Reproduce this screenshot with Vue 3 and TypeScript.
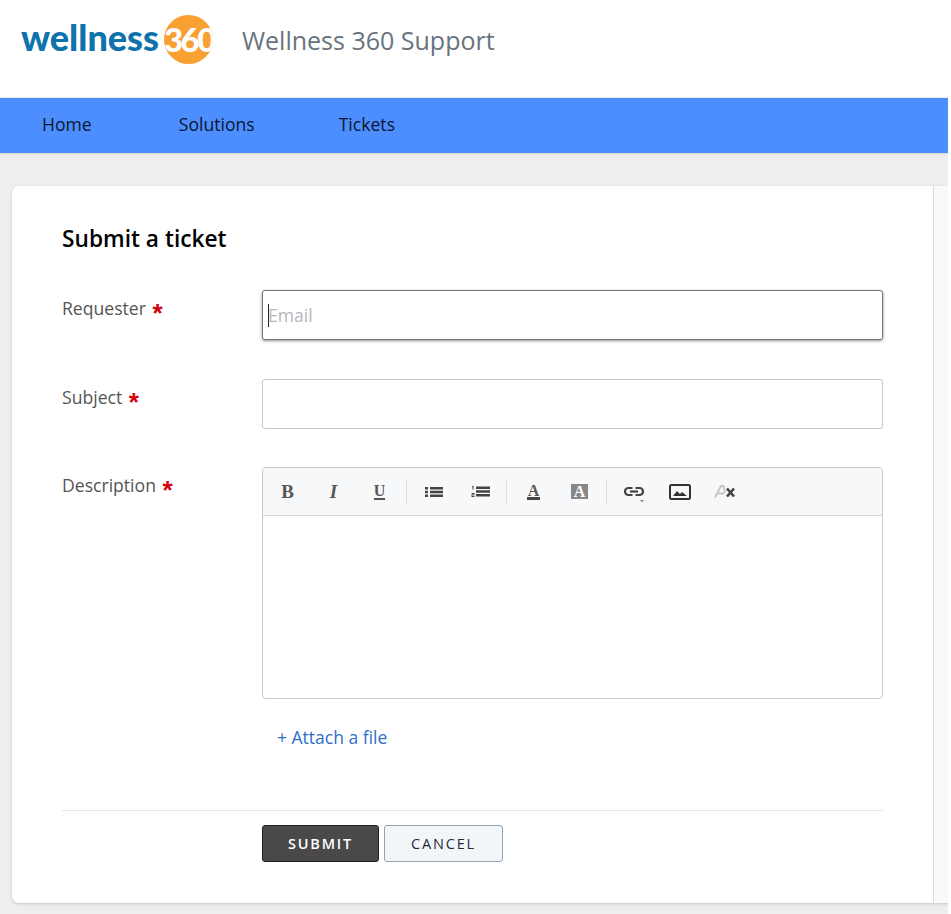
<script setup lang="ts">
interface Field {
  label: string
  key: string
}

const navItems = ['Home', 'Solutions', 'Tickets']
const fields: Field[] = [
  { label: 'Requester', key: 'requester' },
  { label: 'Subject', key: 'subject' },
]
</script>

<template>
  <div class="page">
    <header class="top">
      <div class="logo">
        <span class="logo-word">wellness</span>
        <span class="logo-badge">360</span>
      </div>
      <h1 class="site-name">Wellness 360 Support</h1>
    </header>

    <nav class="nav">
      <a v-for="item in navItems" :key="item" class="nav-link">{{ item }}</a>
    </nav>

    <main class="content">
      <div class="card">
        <form class="form" @submit.prevent>
          <h2 class="title">Submit a ticket</h2>

          <div v-for="f in fields" :key="f.key" class="row">
            <label class="label">{{ f.label }} <span class="req">*</span></label>
            <div v-if="f.key === 'requester'" class="input focused">
              <span class="caret"></span><span class="placeholder">Email</span>
            </div>
            <div v-else class="input"></div>
          </div>

          <div class="row row-desc">
            <label class="label">Description <span class="req">*</span></label>
            <div class="editor">
              <div class="toolbar">
                <div class="group">
                  <button type="button" class="tool"><span class="glyph">B</span></button>
                  <button type="button" class="tool"><span class="glyph italic">I</span></button>
                  <button type="button" class="tool"><span class="glyph under">U</span></button>
                </div>
                <div class="group">
                  <button type="button" class="tool">
                    <svg width="18" height="10" viewBox="0 0 18 10" fill="#444">
                      <path d="M0 0h3v2.500H0zM5 0h13v2.500H5zM0 3.700h3v2.600H0zM5 3.700h13v2.600H5zM0 7.500h3V10H0zM5 7.500h13V10H5z" />
                    </svg>
                  </button>
                  <button type="button" class="tool">
                    <svg width="19" height="11" viewBox="0 0 19 11" fill="#444">
                      <path d="M5 0.500h14v2.500H5zM5 4.200h14v2.600H5zM5 8h14v2.500H5zM1 0h1.500v3.500H1.500V1H1zM.5 7h3v2H1.500v.8h2V11h-3V8.500h2v-.6h-2z" />
                    </svg>
                  </button>
                </div>
                <div class="group">
                  <button type="button" class="tool"><span class="glyph under-thick">A</span></button>
                  <button type="button" class="tool"><span class="glyph boxed">A</span></button>
                </div>
                <div class="group last">
                  <button type="button" class="tool">
                    <svg class="link-icon" width="20" height="20" viewBox="0 0 20 20" fill="none" stroke="#444" stroke-width="2.200">
                      <path d="M8.500 4H4.500a3.500 3.500 0 0 0 0 7h4" />
                      <path d="M11.500 4h4a3.500 3.500 0 0 1 0 7h-4" />
                      <path d="M6 7.500h8" />
                      <path d="M17 16h4l-2 2.500z" fill="#888" stroke="none" transform="translate(-1 0)" />
                    </svg>
                  </button>
                  <button type="button" class="tool">
                    <svg width="22" height="16" viewBox="0 0 22 16">
                      <rect x="1" y="1" width="20" height="14" rx="1.500" fill="none" stroke="#333" stroke-width="2" />
                      <path d="M4 12l4-5 3 3 2-2 5 4z" fill="#333" />
                    </svg>
                  </button>
                  <button type="button" class="tool">
                    <svg class="clear-icon" width="21" height="13" viewBox="0 0 21 13">
                      <path d="M1 12.500L7 1h2.500l1.500 7M4 8.500h6" fill="none" stroke="#c4c4c4" stroke-width="1.800" />
                      <path d="M13 3.500l7 8M20 3.500l-7 8" fill="none" stroke="#444" stroke-width="2.600" />
                    </svg>
                  </button>
                </div>
              </div>
              <div class="editor-body"></div>
            </div>
          </div>

          <div class="attach-row">
            <a class="attach">+ Attach a file</a>
          </div>

          <div class="actions">
            <button type="submit" class="btn btn-primary">SUBMIT</button>
            <button type="button" class="btn btn-plain">CANCEL</button>
          </div>
        </form>
        <aside class="side"></aside>
      </div>
    </main>
  </div>
</template>

<style>
html,
body {
  margin: 0;
  background: #fff;
}
</style>

<style scoped>
.page {
  width: 948px;
  height: 914px;
  overflow: hidden;
  background: #eee;
  font-family: "Open Sans", "Liberation Sans", sans-serif;
}

.top {
  height: 97px;
  background: #fff;
  display: flex;
  align-items: flex-start;
  padding-left: 21px;
}

.logo {
  display: flex;
  align-items: flex-start;
  margin-top: 15px;
  height: 50px;
}

.logo-word {
  font-family: "Lato", "Open Sans", sans-serif;
  font-weight: 900;
  font-size: 36px;
  color: #0e72ac;
  line-height: 50px;
  margin-top: -3px;
}

.logo-badge {
  width: 49px;
  height: 49px;
  margin-left: 5px;
  border-radius: 50%;
  background: #f9a033;
  color: #fff;
  font-family: "Lato", sans-serif;
  font-weight: 900;
  font-size: 33px;
  line-height: 49px;
  text-align: center;
  letter-spacing: -2.500px;
  overflow: hidden;
}

.site-name {
  margin: 23px 0 0 29px;
  font-size: 25px;
  line-height: 35px;
  font-weight: 400;
  color: #68737d;
}

.nav {
  height: 55px;
  margin-top: 1px;
  box-sizing: border-box;
  padding: 0 0 3px 42px;
  background: #4d8eff;
  display: flex;
  align-items: center;
  gap: 84px;
  box-shadow: 0 1px 2px rgba(0, 0, 0, 0.12);
}

.nav-link {
  font-size: 17.600px;
  color: #0b1530;
}

.nav-link:first-child {
  margin-right: 3px;
}

.content {
  padding: 33px 0 0 12px;
}

.card {
  display: flex;
  height: 717px;
  background: #fff;
  border-radius: 7px 0 0 7px;
  box-shadow: 0 1px 3px rgba(0, 0, 0, 0.18);
}

.form {
  width: 921px;
  padding: 0 50px;
  box-sizing: border-box;
  flex: none;
}

.side {
  flex: 1;
  background: #f8f9fb;
  border-left: 1px solid #dcdcdc;
}

.title {
  margin: 36px 0 0;
  font-size: 22.700px;
  line-height: 34px;
  font-weight: 550;
  color: #000;
}

.row {
  display: flex;
  margin-top: 34px;
}

.row + .row {
  margin-top: 39px;
}

.row + .row-desc {
  margin-top: 38px;
}

.label {
  width: 200px;
  flex: none;
  font-size: 17.600px;
  line-height: 24px;
  color: #555;
  padding-top: 6px;
}

.req {
  color: #d3000f;
  font-family: "Liberation Sans", sans-serif;
  font-size: 26px;
  line-height: 20px;
  font-weight: 700;
  vertical-align: -7px;
  margin-left: 2px;
}

.input {
  width: 621px;
  height: 50px;
  box-sizing: border-box;
  border: 1px solid #c8c8c8;
  border-radius: 3px;
  background: #fff;
  display: flex;
  align-items: center;
}

.input.focused {
  border-color: #777;
  box-shadow: 0 1px 3px rgba(0, 0, 0, 0.45);
  padding-left: 5px;
}

.caret {
  width: 1px;
  height: 23px;
  background: #223;
}

.placeholder {
  font-size: 17.600px;
  color: #b4b8bd;
  margin-left: -1px;
}

.editor {
  width: 621px;
  height: 232px;
  box-sizing: border-box;
  border: 1px solid #c8c8c8;
  border-radius: 4px;
  display: flex;
  flex-direction: column;
}

.toolbar {
  height: 47px;
  flex: none;
  display: flex;
  align-items: center;
  background: #f7f8fa;
  border-bottom: 1px solid #d5d5d5;
  border-radius: 4px 4px 0 0;
  padding-left: 2px;
}

.group {
  display: flex;
  align-items: center;
  height: 26px;
  border-right: 1px solid #ddd;
  padding-right: 3px;
}

.group + .group {
  padding-left: 4px;
}

.group.last {
  border-right: 0;
}

.tool {
  width: 46px;
  height: 26px;
  padding: 0;
  border: 0;
  background: none;
  display: flex;
  align-items: center;
  justify-content: center;
}

.link-icon {
  margin-top: 4px;
}

.clear-icon {
  margin-left: -4px;
  margin-top: -1px;
}

.glyph {
  font-family: "Liberation Serif", serif;
  font-weight: 700;
  font-size: 19px;
  color: #555;
  line-height: 18px;
  margin-left: -1px;
}

.glyph.italic {
  font-style: italic;
}

.glyph.under {
  font-size: 16px;
  border-bottom: 2px solid #555;
  line-height: 14px;
}

.glyph.under-thick {
  font-size: 16px;
  line-height: 13px;
  padding: 0 1px;
  border-bottom: 3px solid #444;
}

.glyph.boxed {
  width: 17px;
  height: 15px;
  background: #888;
  color: #fff;
  text-align: center;
  font-size: 16px;
  line-height: 16px;
}

.editor-body {
  flex: 1;
}

.attach-row {
  padding: 25px 0 0 215px;
}

.attach {
  font-size: 17.500px;
  line-height: 26px;
  color: #2f6fc9;
}

.actions {
  margin-top: 60px;
  border-top: 1px solid #e6e6e6;
  padding: 14px 0 0 200px;
  display: flex;
  gap: 5px;
}

.btn {
  height: 37px;
  box-sizing: border-box;
  border-radius: 3px;
  font-family: inherit;
  font-size: 14.500px;
  letter-spacing: 1.800px;
}

.btn-primary {
  width: 117px;
  background: #4a4848;
  border: 1px solid #222;
  color: #fff;
  font-weight: 600;
}

.btn-plain {
  width: 119px;
  background: #f3f6f9;
  border: 1px solid #93a3b5;
  color: #1c2b3e;
  font-weight: 500;
}
</style>
